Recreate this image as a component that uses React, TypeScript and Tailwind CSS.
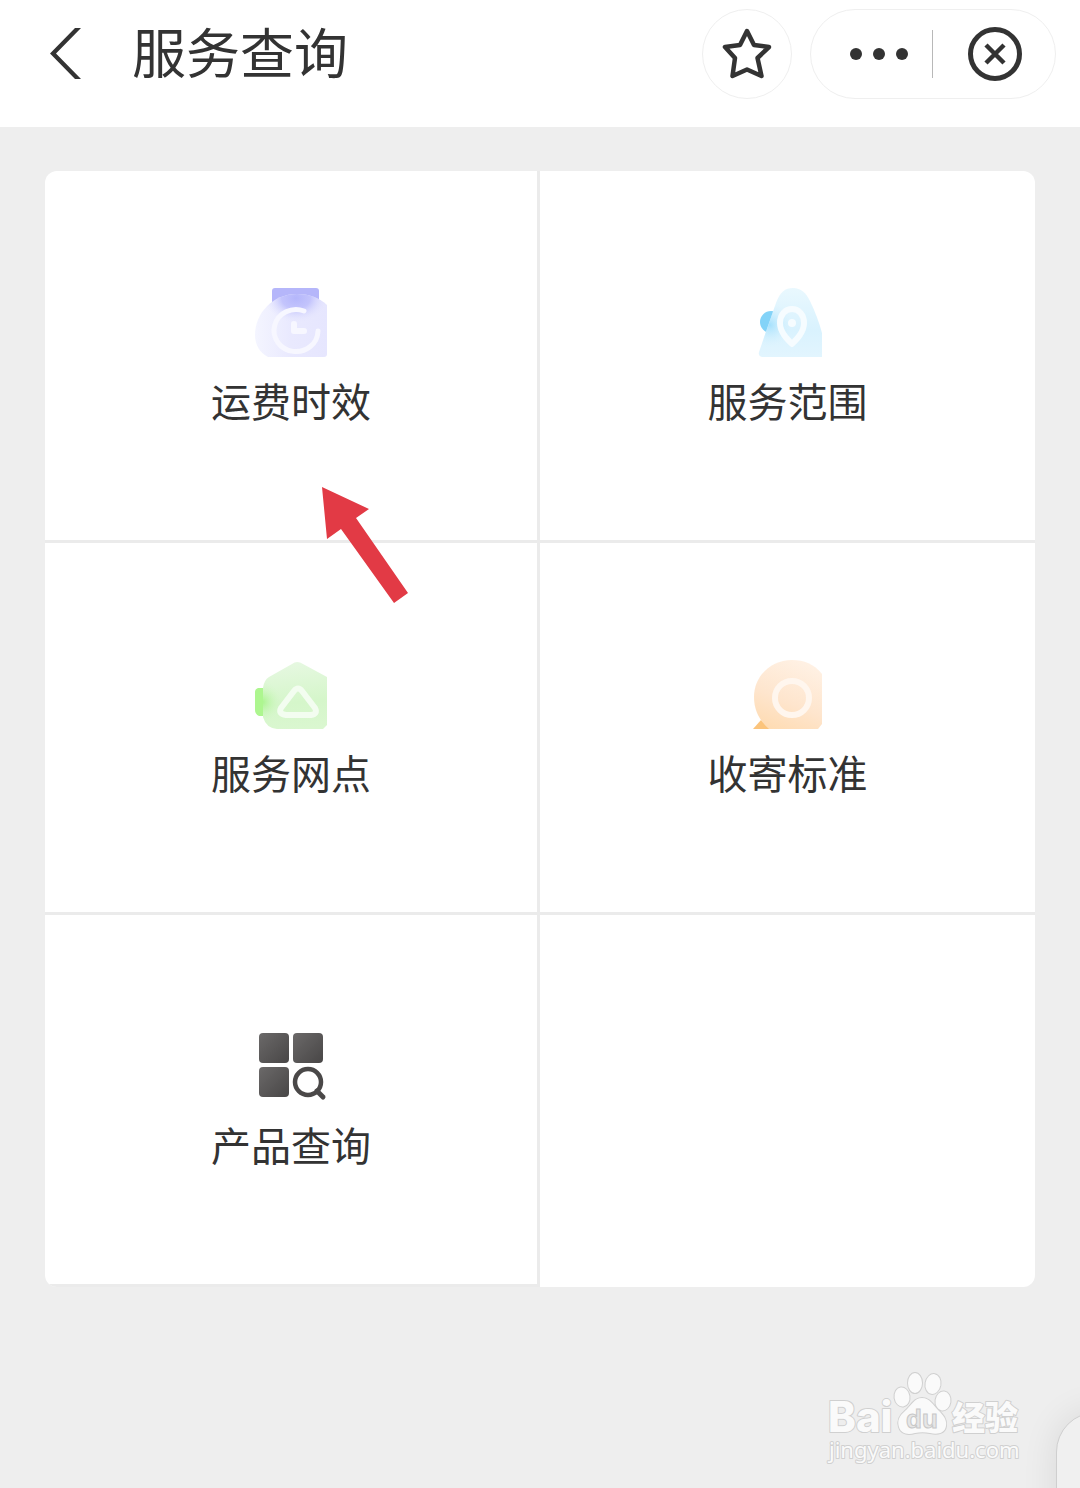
import type { ReactNode } from "react";

function FreightIcon() {
  return (
    <svg viewBox="0 0 72 72" className="size-[72px]" aria-hidden="true">
      <defs>
        <linearGradient id="freightBody" x1="0" y1="0" x2="1" y2="0">
          <stop offset="0" stopColor="#f4f5ff" />
          <stop offset="0.5" stopColor="#e9e9fe" />
          <stop offset="1" stopColor="#e6e6fe" />
        </linearGradient>
        <radialGradient
          id="freightGlow"
          gradientUnits="userSpaceOnUse"
          cx="0"
          cy="0"
          r="1"
          gradientTransform="translate(41 13) scale(32 24)"
        >
          <stop offset="0" stopColor="#b4b6fb" />
          <stop offset="0.45" stopColor="#bfc0fc" stopOpacity="0.9" />
          <stop offset="1" stopColor="#e6e6fe" stopOpacity="0" />
        </radialGradient>
      </defs>
      <path d="M17 6q0-3 3-3h41q3 0 3 3v20H17Z" fill="#b5b6fa" />
      <path d="M72 20C64 12 52 9 42 9C18 9 0 28 0 50C0 60 5 68 13 72H69q3 0 3-3Z" fill="url(#freightBody)" />
      <path d="M72 20C64 12 52 9 42 9C18 9 0 28 0 50C0 60 5 68 13 72H69q3 0 3-3Z" fill="url(#freightGlow)" />
      <path d="M49 26A22 21 0 1 0 63 46" fill="none" stroke="#f7f7ff" strokeWidth="5" strokeLinecap="round" />
      <path d="M39 39V46H49" fill="none" stroke="#f7f7ff" strokeWidth="6" strokeLinecap="round" strokeLinejoin="round" />
    </svg>
  );
}

function AreaIcon() {
  return (
    <svg viewBox="0 0 72 72" className="size-[72px]" aria-hidden="true">
      <defs>
        <linearGradient id="areaBody" x1="0" y1="0" x2="0" y2="1">
          <stop offset="0" stopColor="#e9f8fe" />
          <stop offset="0.6" stopColor="#d9f2fe" />
          <stop offset="1" stopColor="#e2f5fe" />
        </linearGradient>
        <radialGradient id="areaGlow" gradientUnits="userSpaceOnUse" cx="18" cy="40" r="22">
          <stop offset="0" stopColor="#a6e1fd" />
          <stop offset="1" stopColor="#d9f2fe" stopOpacity="0" />
        </radialGradient>
      </defs>
      <circle cx="19" cy="37" r="11" fill="#83d3f8" />
      <path d="M24 18C28 7 33 3 41 3C49 3 54 8 58 16C63 26 67 37 70 48V72H10Q6 71 7 67Z" fill="url(#areaBody)" />
      <path d="M24 18C28 7 33 3 41 3C49 3 54 8 58 16C63 26 67 37 70 48V72H10Q6 71 7 67Z" fill="url(#areaGlow)" />
      <path
        d="M40 24C33 24 28 30 28 38C28 47 35 54 40 59C45 54 52 47 52 38C52 30 47 24 40 24Z"
        fill="none"
        stroke="#f6fcff"
        strokeWidth="6"
        strokeLinejoin="round"
      />
      <circle cx="40" cy="38" r="4" fill="#f6fcff" />
    </svg>
  );
}

function OutletIcon() {
  return (
    <svg viewBox="0 0 72 72" className="size-[72px]" aria-hidden="true">
      <defs>
        <linearGradient id="outletBody" x1="0.5" y1="0" x2="0.6" y2="1">
          <stop offset="0" stopColor="#e6f8e1" />
          <stop offset="0.6" stopColor="#d5f6ca" />
          <stop offset="1" stopColor="#daf7d0" />
        </linearGradient>
        <radialGradient id="outletGlow" gradientUnits="userSpaceOnUse" cx="7" cy="45" r="20">
          <stop offset="0" stopColor="#a8f58c" />
          <stop offset="1" stopColor="#d5f6ca" stopOpacity="0" />
        </radialGradient>
      </defs>
      <path d="M3 31H14V59H4Q0 57 0 53V35Q0 32 3 31Z" fill="#adf68f" />
      <path d="M8 31Q9 23 14 20L37 7Q42 3 48 7L72 20V68L68 72H22Q11 71 8 60Z" fill="url(#outletBody)" />
      <path d="M8 31Q9 23 14 20L37 7Q42 3 48 7L72 20V68L68 72H22Q11 71 8 60Z" fill="url(#outletGlow)" />
      <path
        d="M39 34Q43 29 47 34L60 51Q63 57 56 58H31Q23 57 26 51Z"
        fill="none"
        stroke="#f3fdf0"
        strokeWidth="6"
        strokeLinejoin="round"
      />
    </svg>
  );
}

function StandardIcon() {
  return (
    <svg viewBox="0 0 72 72" className="size-[72px]" aria-hidden="true">
      <defs>
        <linearGradient id="standardBody" x1="0.7" y1="0" x2="0.3" y2="1">
          <stop offset="0" stopColor="#fff1e4" />
          <stop offset="0.6" stopColor="#fee5cd" />
          <stop offset="1" stopColor="#fedcb4" />
        </linearGradient>
      </defs>
      <path d="M1 72L9 63L20 72Z" fill="#fbc47c" />
      <path d="M70 17C62 7 52 3 40 3C19 3 2 19 2 40C2 54 8 64 17 72H66L70 67Z" fill="url(#standardBody)" />
      <circle cx="40" cy="41" r="17" fill="none" stroke="#fff6ee" strokeWidth="6" />
    </svg>
  );
}

function ProductIcon() {
  return (
    <svg viewBox="0 0 72 72" className="size-[72px]" aria-hidden="true">
      <defs>
        <linearGradient id="tile" x1="0" y1="0" x2="1" y2="1">
          <stop offset="0" stopColor="#6b6969" />
          <stop offset="1" stopColor="#484646" />
        </linearGradient>
      </defs>
      <rect x="4" y="4" width="30" height="30" rx="4" fill="url(#tile)" />
      <rect x="38" y="4" width="30" height="30" rx="4" fill="url(#tile)" />
      <rect x="4" y="38" width="30" height="30" rx="4" fill="url(#tile)" />
      <circle cx="53" cy="53" r="13" fill="none" stroke="#4a4848" strokeWidth="4.500" />
      <path d="M62 62L68 68" stroke="#4a4848" strokeWidth="5" strokeLinecap="round" />
    </svg>
  );
}

function Cell({ icon, label }: { icon: ReactNode; label: string }) {
  return (
    <li className="flex border-b-3 border-[#ebebeb] odd:border-r-3">
      <a href="#" className="flex h-[369px] w-full flex-col items-center justify-center gap-[19px] pb-0.5">
        {icon}
        <span className="text-[40px] leading-12">{label}</span>
      </a>
    </li>
  );
}

function PointerArrow() {
  return (
    <svg viewBox="322 487 87 117" className="absolute top-[316px] left-[277px] h-[117px] w-[87px]" aria-hidden="true">
      <path d="M322 487L369 509L356 518L408 593L394 603L341 529L327 539Z" fill="#e23a45" />
    </svg>
  );
}

function Watermark() {
  return (
    <svg
      viewBox="0 0 200 100"
      className="absolute right-[54px] bottom-[18px] h-[100px] w-[200px]"
      role="img"
      aria-label="Baidu"
    >
      <g fill="#fafafa" stroke="#d0d0d0" strokeWidth="2" paintOrder="stroke" strokeLinejoin="round">
        <text x="2" y="62" fontSize="42" fontWeight="800" fontFamily="Inter, sans-serif">
          Bai
        </text>
        <ellipse cx="76" cy="27" rx="7.500" ry="9.500" transform="rotate(-8 76 27)" />
        <ellipse cx="89" cy="13" rx="7" ry="10" />
        <ellipse cx="107" cy="14" rx="7.500" ry="10" transform="rotate(10 107 14)" />
        <ellipse cx="117" cy="31" rx="7.500" ry="9.500" transform="rotate(8 117 31)" />
        <path d="M96 28C88 28 85 36 79 41C73 46 71 51 73 57C75 64 82 65 89 63C94 62 99 62 104 63C112 65 119 63 120 56C121 49 117 45 112 40C107 35 104 28 96 28Z" />
        <text x="126" y="60" fontSize="33" fontWeight="900" fontFamily="'Noto Sans CJK SC', sans-serif">
          经验
        </text>
        <text x="3" y="88" fontSize="22" fontFamily="'Noto Sans', sans-serif">
          jingyan.baidu.com
        </text>
      </g>
      <text
        x="80"
        y="58"
        fontSize="26"
        fontWeight="700"
        fontFamily="'Liberation Sans', sans-serif"
        fill="#e6e6e6"
        stroke="#c8c8c8"
        strokeWidth="1"
      >
        du
      </text>
    </svg>
  );
}

export default function App() {
  return (
    <div className="relative flex min-h-screen flex-col overflow-hidden bg-[#eeeeee] font-['Noto_Sans_CJK_SC',sans-serif] text-[#333333]">
      <header className="flex h-[127px] items-start bg-white pt-[9px] pr-6 pl-11">
        <button type="button" aria-label="返回" className="flex h-[90px] w-11 items-center">
          <svg viewBox="0 0 44 60" className="h-[60px] w-11" aria-hidden="true">
            <path d="M31 4H37L12 29.500L37 55H31L6 29.500Z" fill="#333333" />
          </svg>
        </button>
        <h1 className="ml-11 flex-1 text-[54px] leading-[84px]">服务查询</h1>
        <button
          type="button"
          aria-label="收藏"
          className="flex size-[90px] items-center justify-center rounded-full border border-[#efefef]"
        >
          <svg viewBox="0 0 52 56" className="h-14 w-[52px]" aria-hidden="true">
            <path
              d="M26 5L33 19L48 21L36.500 32L40.500 50L26 43.500L11.500 50L14 32L4 21L19 19Z"
              fill="none"
              stroke="#333333"
              strokeWidth="4.500"
              strokeLinejoin="round"
            />
          </svg>
        </button>
        <div className="ml-[18px] flex h-[90px] w-[246px] items-center rounded-full border border-[#efefef]">
          <button type="button" aria-label="更多" className="flex h-full flex-1 items-center justify-end gap-[11px] pr-6">
            <span className="size-3 rounded-full bg-[#333333]" />
            <span className="size-3 rounded-full bg-[#333333]" />
            <span className="size-3 rounded-full bg-[#333333]" />
          </button>
          <span className="h-12 w-px bg-[#b8b8b8]" />
          <button type="button" aria-label="关闭" className="flex h-full w-[122px] items-center justify-center pl-0.5">
            <svg viewBox="0 0 54 54" className="size-[54px]" aria-hidden="true">
              <circle cx="27" cy="27" r="24.500" fill="none" stroke="#333333" strokeWidth="5" />
              <path d="M18 18L36 36M36 18L18 36" stroke="#333333" strokeWidth="4.500" />
            </svg>
          </button>
        </div>
      </header>

      <main className="relative mx-[45px] mt-11">
        <ul className="grid grid-cols-2 overflow-hidden rounded-xl bg-white">
          <Cell icon={<FreightIcon />} label="运费时效" />
          <Cell icon={<AreaIcon />} label="服务范围" />
          <Cell icon={<OutletIcon />} label="服务网点" />
          <Cell icon={<StandardIcon />} label="收寄标准" />
          <Cell icon={<ProductIcon />} label="产品查询" />
        </ul>
        <PointerArrow />
      </main>

      <Watermark />
      <div className="absolute -right-12 -bottom-12 h-[124px] w-[72px] rounded-tl-[40px] border border-[#cfcfcf] bg-[#f0f0f0] shadow-[0_0_36px_rgba(0,0,0,0.09)]" />
    </div>
  );
}
